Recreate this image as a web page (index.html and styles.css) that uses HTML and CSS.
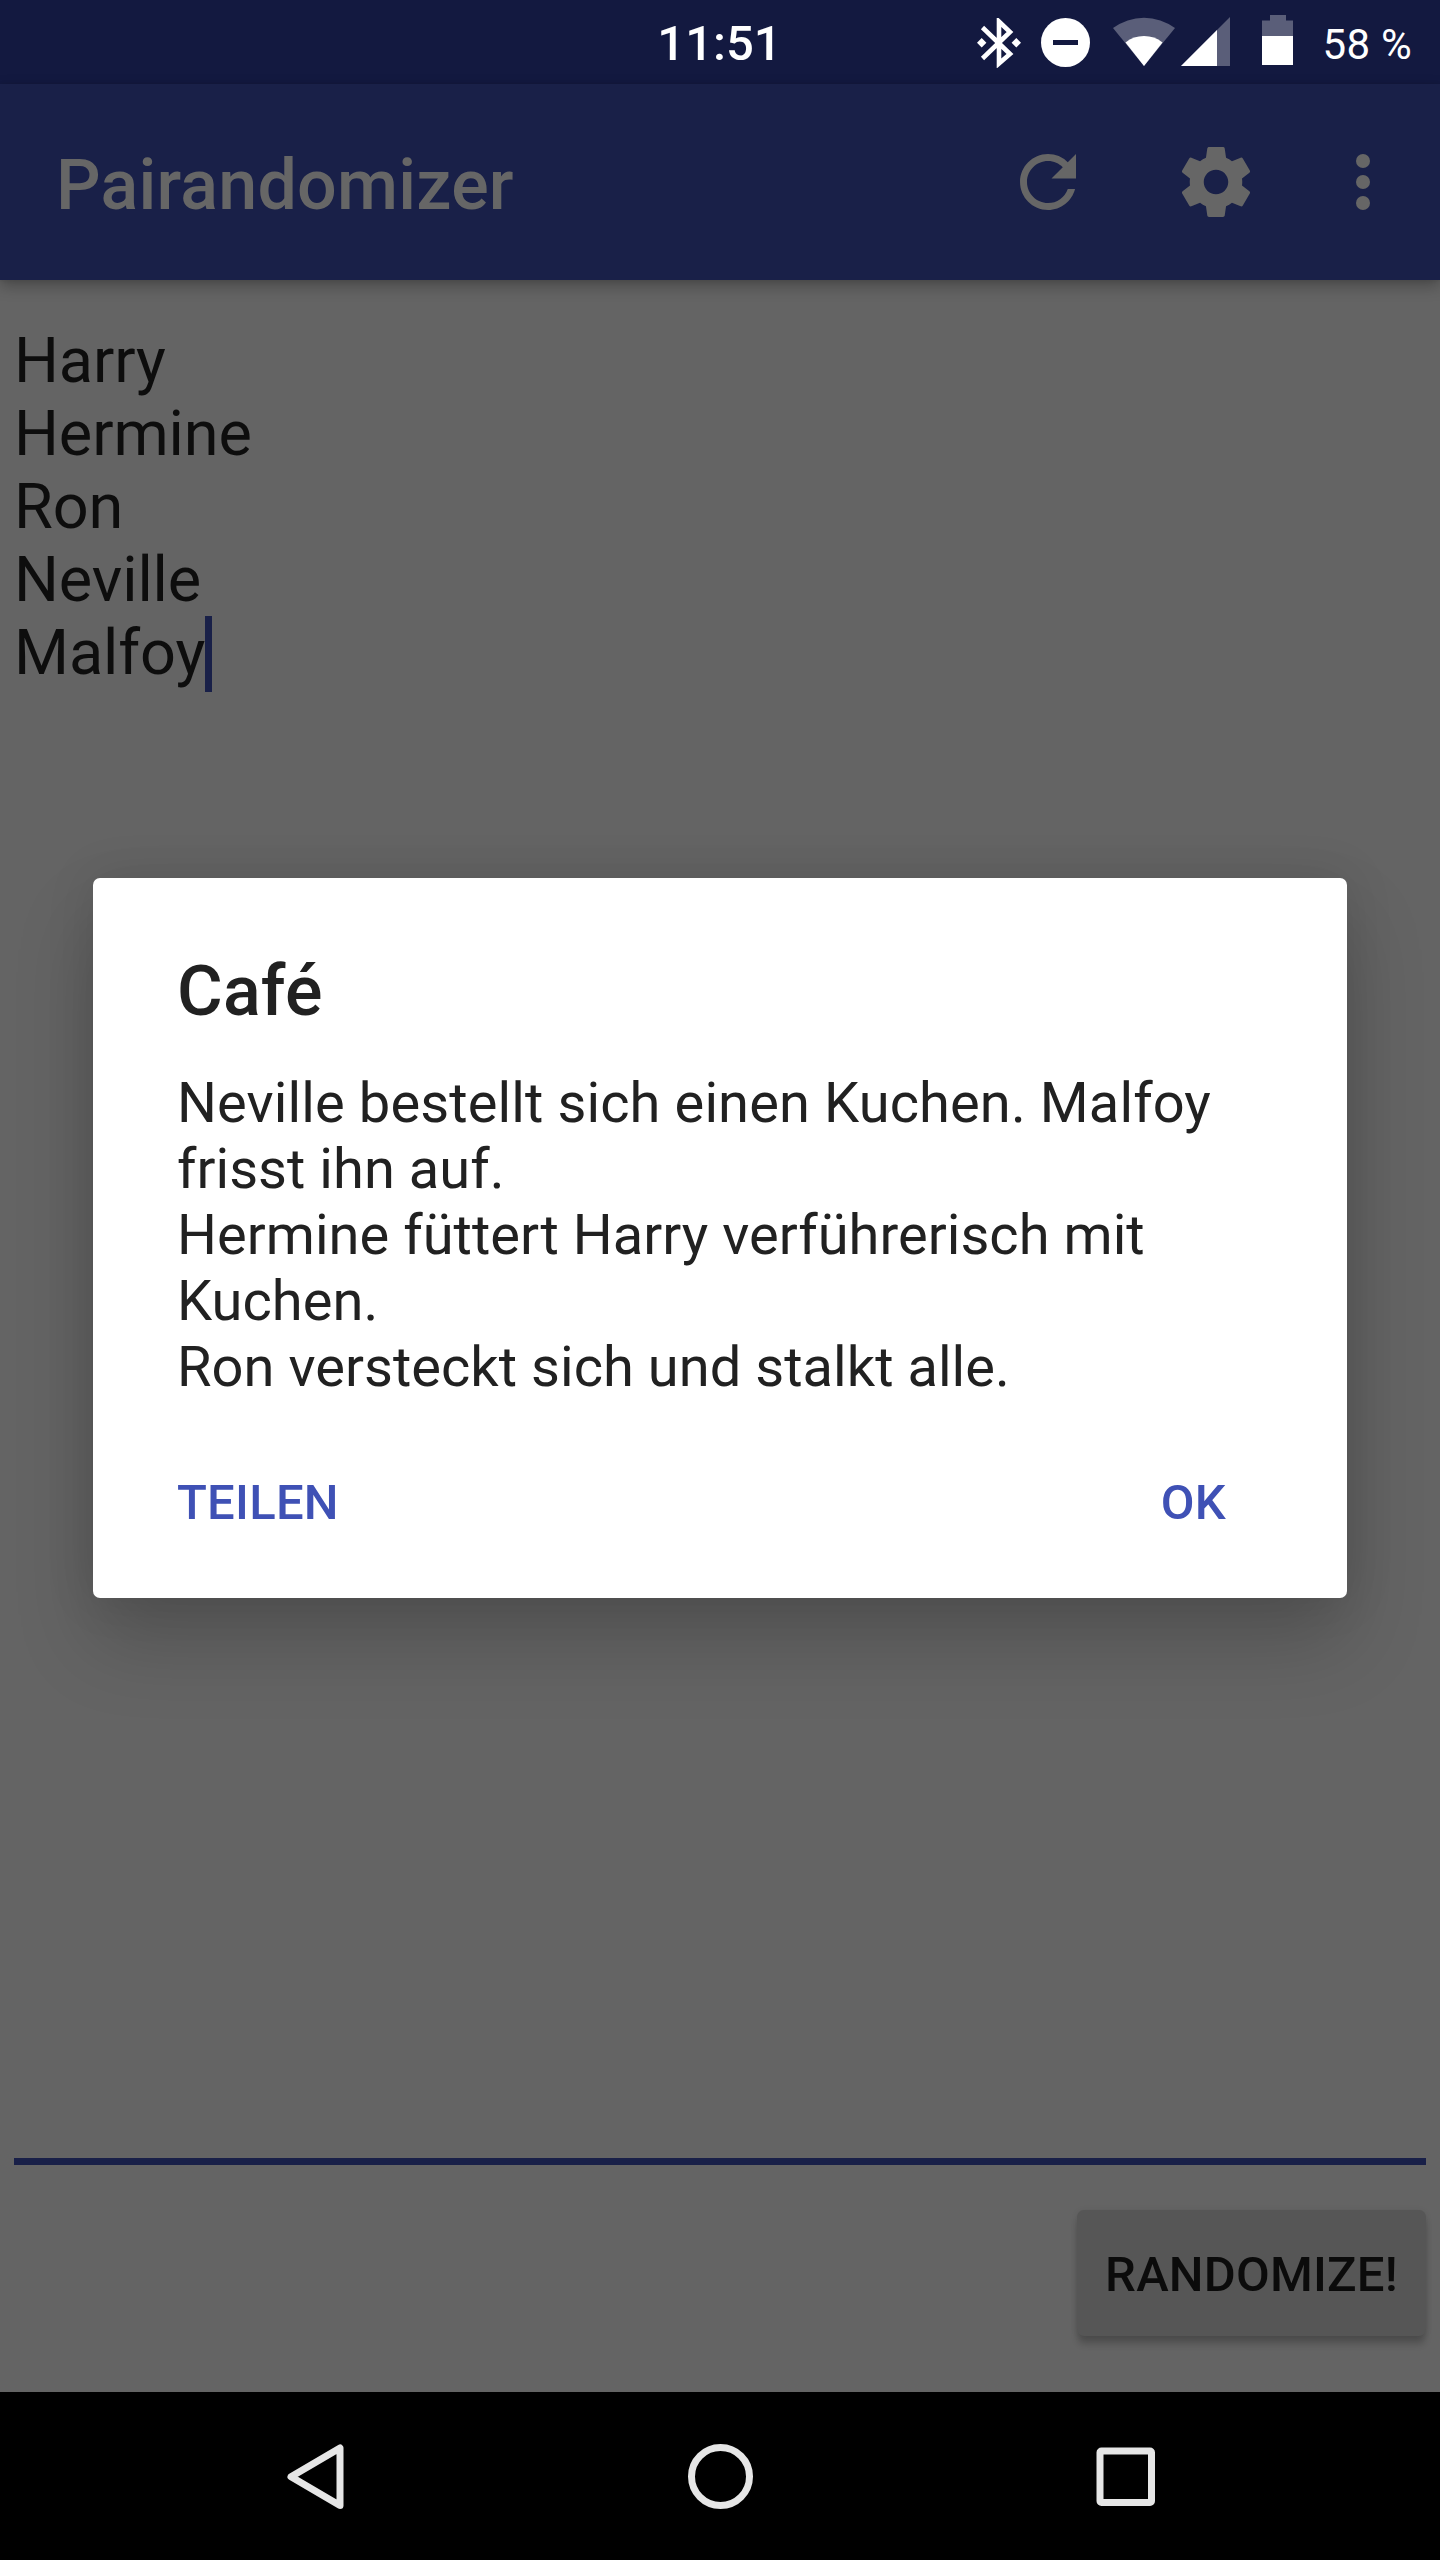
FILE: index.html
```html
<!DOCTYPE html>
<html lang="de">
<head>
<meta charset="utf-8">
<title>Pairandomizer</title>
<link rel="stylesheet" href="styles.css">
</head>
<body>
<div class="screen">
  <header class="status-bar">
    <time class="clock">11:51</time>
    <div class="status-icons">
      <svg class="bluetooth" width="44" height="50" viewBox="0 0 44 50" fill="none" stroke="#fff">
        <path d="M5.500 9.500L33 36L22 45.500V3.500L33 14L5.500 40.500" stroke-width="4.600"/>
        <path d="M0 24.700L4.700 20L9.400 24.700L4.700 29.400zM34.600 24.700L39.300 20L44 24.700L39.300 29.400z" fill="#fff" stroke="none"/>
      </svg>
      <svg class="dnd" width="49" height="49" viewBox="0 0 49 49">
        <circle cx="24.500" cy="24.500" r="24.500" fill="#fff"/>
        <path d="M12 22h25v5H12z" fill="#131940"/>
      </svg>
      <svg class="wifi" width="62" height="49" viewBox="0 0 62 49">
        <path d="M0 11A52 52 0 0 1 62 11L31 49z" fill="#5a5e79"/>
        <path d="M12.500 25.500A30 30 0 0 1 49.500 25.500L31 49z" fill="#fff"/>
      </svg>
      <svg class="signal" width="49" height="49" viewBox="0 0 49 49">
        <path d="M0 49L49 0V49z" fill="#5a5e79"/>
        <path d="M0 49L36 13V49z" fill="#fff"/>
      </svg>
      <svg class="battery" width="31" height="50" viewBox="0 0 31 50">
        <path d="M8 0H24V5.500H31V22H0V5.500H8z" fill="#5a5e79"/>
        <path d="M0 21H31V50H0z" fill="#fff"/>
      </svg>
      <span class="battery-level">58 %</span>
    </div>
  </header>

  <div class="app-bar">
    <h1 class="app-title">Pairandomizer</h1>
    <div class="actions">
      <svg class="action" viewBox="0 0 24 24"><path d="M17.650 6.350A7.958 7.958 0 0 0 12 4c-4.420 0-7.990 3.580-7.990 8s3.570 8 7.990 8c3.730 0 6.840-2.550 7.730-6h-2.080A5.990 5.990 0 0 1 12 18c-3.310 0-6-2.690-6-6s2.690-6 6-6c1.660 0 3.140.690 4.220 1.780L13 11h7V4l-2.350 2.350z"/></svg>
      <svg class="action" viewBox="0 0 24 24"><path d="M19.430 12.980c.040-.320.070-.640.070-.980s-.030-.660-.070-.980l2.110-1.650c.190-.150.240-.420.120-.640l-2-3.460c-.120-.220-.390-.300-.610-.220l-2.490 1c-.520-.400-1.080-.730-1.690-.980l-.380-2.650A.488.488 0 0 0 14 2h-4c-.250 0-.460.180-.490.420l-.380 2.650c-.610.250-1.170.590-1.690.980l-2.490-1c-.230-.090-.490 0-.610.220l-2 3.460c-.130.220-.070.490.120.640l2.110 1.650c-.040.320-.070.650-.070.980s.030.660.070.980l-2.110 1.650c-.190.150-.240.420-.120.640l2 3.460c.120.220.390.300.610.220l2.490-1c.520.400 1.080.730 1.690.980l.380 2.650c.030.240.240.420.490.420h4c.250 0 .460-.180.490-.420l.380-2.650c.610-.250 1.170-.590 1.690-.980l2.490 1c.230.090.490 0 .610-.220l2-3.460c.120-.220.070-.490-.120-.640l-2.110-1.650zM12 15.500c-1.930 0-3.500-1.570-3.500-3.500s1.570-3.500 3.500-3.500 3.500 1.570 3.500 3.500-1.570 3.500-3.500 3.500z"/></svg>
      <svg class="action overflow" viewBox="0 0 24 24"><circle cx="12" cy="6" r="2"/><circle cx="12" cy="12" r="2"/><circle cx="12" cy="18" r="2"/></svg>
    </div>
  </div>

  <main class="content">
    <div class="names">
      <div>Harry</div>
      <div>Hermine</div>
      <div>Ron</div>
      <div>Neville</div>
      <div class="active-line">Malfoy<span class="cursor"></span></div>
    </div>
    <button class="randomize">RANDOMIZE!</button>
  </main>

  <nav class="nav-bar">
    <svg width="84" height="84" viewBox="0 0 84 84"><path d="M67 15V72.500L18 43.800z"/></svg>
    <svg width="84" height="84" viewBox="0 0 84 84"><circle cx="42.500" cy="43.500" r="29"/></svg>
    <svg width="84" height="84" viewBox="0 0 84 84"><rect x="17" y="18" width="51.500" height="51.500" rx="1.500"/></svg>
  </nav>

  <section class="dialog" role="dialog">
    <h2 class="dialog-title">Café</h2>
    <p class="message"><span class="lead">Neville bestellt sich einen Kuchen. Malfoy</span><br>frisst ihn auf.<br>Hermine füttert Harry verführerisch mit<br>Kuchen.<br>Ron versteckt sich und stalkt alle.</p>
    <div class="dialog-buttons"><span>TEILEN</span><span>OK</span></div>
  </section>
</div>
</body>
</html>
```
FILE: styles.css
```css
* { box-sizing: border-box; }
body { margin: 0; font-family: Roboto, "Liberation Sans", sans-serif; }
h1, h2, p { margin: 0; font-weight: 400; }
svg { display: block; flex: none; }

.screen {
  position: relative;
  display: flex;
  flex-direction: column;
  width: 1440px;
  height: 2560px;
  overflow: hidden;
  background: #646464;
}

.status-bar {
  display: grid;
  grid-template-columns: 1fr auto 1fr;
  height: 84px;
  background: #131940;
  color: #fff;
}
.clock {
  grid-column: 2;
  font-size: 49px;
  font-weight: 500;
  line-height: 57px;
  padding: 15px 1px 0 0;
}
.status-icons {
  grid-column: 3;
  display: flex;
  justify-content: flex-end;
  padding-right: 28px;
}
.bluetooth { margin: 18px 20px 0 0; }
.dnd { margin: 18px 23px 0 0; }
.wifi { margin: 17px 6px 0 0; }
.signal { margin: 17px 32px 0 0; }
.battery { margin: 15px 30px 0 0; }
.battery-level { font-size: 42px; line-height: 49px; padding: 20px 0 0; letter-spacing: .25px; white-space: nowrap; }

.app-bar {
  position: relative;
  display: flex;
  align-items: center;
  justify-content: space-between;
  height: 196px;
  padding: 0 35px 0 56px;
  background: #192048;
  box-shadow: 0 6px 14px rgba(0, 0, 0, .28), 0 0 4px rgba(0, 0, 0, .1);
}
.app-title { font-size: 70px; font-weight: 500; line-height: 82px; padding-top: 6px; letter-spacing: .22px; color: #666; }
.actions { display: flex; gap: 84px; }
.action { width: 84px; height: 84px; fill: #666; }
.overflow { margin-left: -21px; }

.content {
  flex: 1;
  display: flex;
  flex-direction: column;
  padding: 44px 14px 56px;
}
.names {
  height: 1841px;
  border-bottom: 7px solid #192048;
  font-size: 63px;
  line-height: 73px;
  letter-spacing: -.1px;
  color: #0d0d0d;
}
.active-line { display: flex; }
.cursor { width: 7px; height: 76px; background: #192048; }
.randomize {
  align-self: flex-end;
  width: 349px;
  height: 126px;
  margin-top: 45px;
  padding: 3px 0 0;
  border: 0;
  border-radius: 7px;
  background: #565656;
  box-shadow: 0 9px 7px -1px rgba(0, 0, 0, .2), 0 1px 6px rgba(0, 0, 0, .1);
  color: #0b0b0b;
  font: 500 49px Roboto, "Liberation Sans", sans-serif;
  letter-spacing: .2px;
}

.nav-bar {
  display: flex;
  justify-content: center;
  gap: 321px;
  height: 168px;
  padding-top: 41px;
  background: #000;
}
.nav-bar svg { fill: none; stroke: #e6e6e6; stroke-width: 7; stroke-linejoin: round; }

.dialog {
  position: absolute;
  left: 93px;
  top: 878px;
  width: 1254px;
  height: 720px;
  padding: 72px 84px 0;
  border-radius: 7px;
  background: #fff;
  color: #212121;
  box-shadow: 0 44px 80px rgba(0, 0, 0, .18), 0 0 50px rgba(0, 0, 0, .11);
}
.dialog-title { font-size: 70px; font-weight: 500; line-height: 82px; letter-spacing: .2px; }
.message { margin-top: 38px; font-size: 56px; line-height: 66px; letter-spacing: .04px; white-space: nowrap; }
.lead { letter-spacing: .12px; }
.dialog-buttons {
  display: flex;
  justify-content: space-between;
  margin-top: 74px;
  padding-right: 37px;
  color: #3f51b5;
  font-size: 49px;
  font-weight: 500;
  line-height: 57px;
  letter-spacing: .25px;
}
```
